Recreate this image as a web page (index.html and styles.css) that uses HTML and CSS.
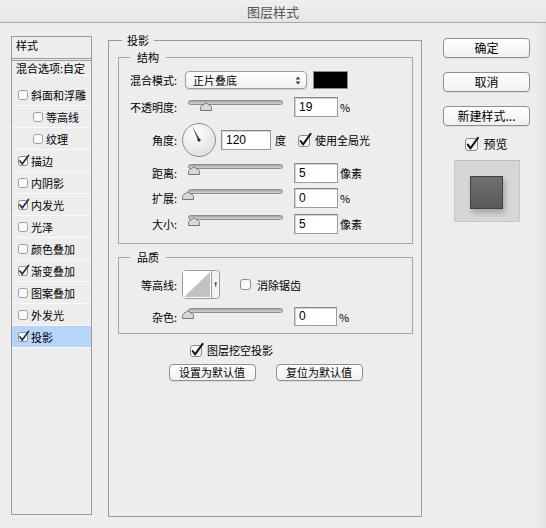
FILE: index.html
```html
<!DOCTYPE html>
<html lang="zh-CN">
<head>
<meta charset="utf-8">
<title>图层样式</title>
<link rel="stylesheet" href="styles.css">
</head>
<body>
<svg class="defs" width="0" height="0" aria-hidden="true">
  <defs>
    <radialGradient id="dialg" cx="40%" cy="30%" r="75%">
      <stop offset="0" stop-color="#ffffff"/>
      <stop offset="1" stop-color="#dedede"/>
    </radialGradient>
  </defs>
</svg>
<div class="titlebar">图层样式</div>
<div class="main">
  <div class="styles-list">
    <div class="list-head">样式</div>
    <div class="list-blend">混合选项:自定</div>
    <ul class="list-items">
      <li class="item"><svg class="lcb" width="10" height="10" viewBox="0 0 10 10"><rect x="0.5" y="0.5" width="9" height="9" rx="2" fill="#fbfbfb" stroke="#9d9d9d"/></svg>斜面和浮雕</li>
      <li class="item sub"><svg class="lcb" width="10" height="10" viewBox="0 0 10 10"><rect x="0.5" y="0.5" width="9" height="9" rx="2" fill="#fbfbfb" stroke="#9d9d9d"/></svg>等高线</li>
      <li class="item sub"><svg class="lcb" width="10" height="10" viewBox="0 0 10 10"><rect x="0.5" y="0.5" width="9" height="9" rx="2" fill="#fbfbfb" stroke="#9d9d9d"/></svg>纹理</li>
      <li class="item"><svg class="lcb" width="10" height="10" viewBox="0 0 10 10"><rect x="0.5" y="0.5" width="9" height="9" rx="2" fill="#fbfbfb" stroke="#8a8a8a"/><path d="M2 5 L4.2 8 L10.5 -0.5" fill="none" stroke="#1e2d55" stroke-width="1.7" stroke-linecap="round" stroke-linejoin="round"/></svg>描边</li>
      <li class="item"><svg class="lcb" width="10" height="10" viewBox="0 0 10 10"><rect x="0.5" y="0.5" width="9" height="9" rx="2" fill="#fbfbfb" stroke="#9d9d9d"/></svg>内阴影</li>
      <li class="item"><svg class="lcb" width="10" height="10" viewBox="0 0 10 10"><rect x="0.5" y="0.5" width="9" height="9" rx="2" fill="#fbfbfb" stroke="#8a8a8a"/><path d="M2 5 L4.2 8 L10.5 -0.5" fill="none" stroke="#1e2d55" stroke-width="1.7" stroke-linecap="round" stroke-linejoin="round"/></svg>内发光</li>
      <li class="item"><svg class="lcb" width="10" height="10" viewBox="0 0 10 10"><rect x="0.5" y="0.5" width="9" height="9" rx="2" fill="#fbfbfb" stroke="#9d9d9d"/></svg>光泽</li>
      <li class="item"><svg class="lcb" width="10" height="10" viewBox="0 0 10 10"><rect x="0.5" y="0.5" width="9" height="9" rx="2" fill="#fbfbfb" stroke="#9d9d9d"/></svg>颜色叠加</li>
      <li class="item"><svg class="lcb" width="10" height="10" viewBox="0 0 10 10"><rect x="0.5" y="0.5" width="9" height="9" rx="2" fill="#fbfbfb" stroke="#8a8a8a"/><path d="M2 5 L4.2 8 L10.5 -0.5" fill="none" stroke="#1e2d55" stroke-width="1.7" stroke-linecap="round" stroke-linejoin="round"/></svg>渐变叠加</li>
      <li class="item"><svg class="lcb" width="10" height="10" viewBox="0 0 10 10"><rect x="0.5" y="0.5" width="9" height="9" rx="2" fill="#fbfbfb" stroke="#9d9d9d"/></svg>图案叠加</li>
      <li class="item"><svg class="lcb" width="10" height="10" viewBox="0 0 10 10"><rect x="0.5" y="0.5" width="9" height="9" rx="2" fill="#fbfbfb" stroke="#9d9d9d"/></svg>外发光</li>
      <li class="item selected"><svg class="lcb" width="10" height="10" viewBox="0 0 10 10"><rect x="0.5" y="0.5" width="9" height="9" rx="2" fill="#fbfbfb" stroke="#8a8a8a"/><path d="M2 5 L4.2 8 L10.5 -0.5" fill="none" stroke="#1e2d55" stroke-width="1.7" stroke-linecap="round" stroke-linejoin="round"/></svg>投影</li>
    </ul>
  </div>

  <div class="panel">
    <div class="legend legend-outer">投影</div>

    <div class="group group-structure">
      <div class="legend">结构</div>
      <div class="row row-blend">
        <div class="lbl">混合模式:</div>
        <div class="select">
          <span>正片叠底</span>
          <svg class="sel-arrows" width="6" height="9" viewBox="0 0 6 9"><path d="M0.5 3.5 L3 0.5 L5.5 3.5 Z M0.5 5.5 L3 8.5 L5.5 5.5 Z" fill="#444"/></svg>
        </div>
        <div class="swatch"></div>
      </div>
      <div class="row row-opacity">
        <div class="lbl">不透明度:</div>
        <div class="slider slider-top3">
          <div class="track"></div>
          <svg class="thumb" style="left:12px" width="12" height="9" viewBox="0 0 12 9"><path d="M0.5 8.5 L0.5 5.6 Q0.5 4.4 1.8 3.6 L6 0.8 L10.2 3.6 Q11.5 4.4 11.5 5.6 L11.5 8.5 Z" fill="#d9d9d9" stroke="#777"/></svg>
        </div>
        <div class="field">19</div>
        <div class="unit">%</div>
      </div>
      <div class="row row-angle">
        <div class="lbl">角度:</div>
        <svg class="dial" width="34" height="34" viewBox="0 0 34 34"><circle cx="17" cy="17" r="16.5" fill="url(#dialg)" stroke="#8f8f8f"/><path d="M16.2 17.4 L10.2 3.4 L17.8 16.6 Z" fill="#333"/><circle cx="17" cy="17" r="1.6" fill="#222"/></svg>
        <div class="field field-angle">120</div>
        <div class="unit unit-deg">度</div>
        <svg class="cb cb-global" width="14" height="14" viewBox="0 0 14 14"><rect x="0.5" y="2.5" width="11" height="11" rx="2.5" fill="#f7f7f7" stroke="#8c8c8c"/><path d="M2.6 8 L5.1 11.4 L12.6 0.9" fill="none" stroke="#151515" stroke-width="2" stroke-linecap="round" stroke-linejoin="round"/></svg>
        <div class="cb-text">使用全局光</div>
      </div>
      <div class="row row-distance">
        <div class="lbl">距离:</div>
        <div class="slider slider-top1">
          <div class="track"></div>
          <svg class="thumb" style="left:0px" width="12" height="9" viewBox="0 0 12 9"><path d="M0.5 8.5 L0.5 5.6 Q0.5 4.4 1.8 3.6 L6 0.8 L10.2 3.6 Q11.5 4.4 11.5 5.6 L11.5 8.5 Z" fill="#d9d9d9" stroke="#777"/></svg>
        </div>
        <div class="field">5</div>
        <div class="unit">像素</div>
      </div>
      <div class="row row-spread">
        <div class="lbl">扩展:</div>
        <div class="slider slider-top1">
          <div class="track"></div>
          <svg class="thumb" style="left:-6px" width="12" height="9" viewBox="0 0 12 9"><path d="M0.5 8.5 L0.5 5.6 Q0.5 4.4 1.8 3.6 L6 0.8 L10.2 3.6 Q11.5 4.4 11.5 5.6 L11.5 8.5 Z" fill="#d9d9d9" stroke="#777"/></svg>
        </div>
        <div class="field">0</div>
        <div class="unit">%</div>
      </div>
      <div class="row row-size">
        <div class="lbl">大小:</div>
        <div class="slider slider-top1">
          <div class="track"></div>
          <svg class="thumb" style="left:0px" width="12" height="9" viewBox="0 0 12 9"><path d="M0.5 8.5 L0.5 5.6 Q0.5 4.4 1.8 3.6 L6 0.8 L10.2 3.6 Q11.5 4.4 11.5 5.6 L11.5 8.5 Z" fill="#d9d9d9" stroke="#777"/></svg>
        </div>
        <div class="field">5</div>
        <div class="unit">像素</div>
      </div>
    </div>

    <div class="group group-quality">
      <div class="legend">品质</div>
      <div class="row row-contour">
        <div class="lbl">等高线:</div>
        <svg class="contour" width="38" height="29" viewBox="0 0 38 29"><rect x="0.5" y="0.5" width="37" height="28" rx="3" fill="#f3f3f3" stroke="#9a9a9a"/><rect x="1" y="1" width="28" height="27" fill="#ffffff"/><polygon points="2,27 28,2 28,27" fill="#c2c2c2"/><line x1="29.5" y1="0.5" x2="29.5" y2="28.5" stroke="#9a9a9a"/><path d="M32.2 12.5 L35.2 12.5 L34.2 14.2 L34.2 16.5 L33.2 16.5 L33.2 14.2 Z" fill="#333"/></svg>
        <svg class="cb cb-anti" width="11" height="11" viewBox="0 0 11 11"><rect x="0.5" y="0.5" width="10" height="10" rx="2.5" fill="#f9f9f9" stroke="#8c8c8c"/></svg>
        <div class="cb-text cb-text-anti">消除锯齿</div>
      </div>
      <div class="row row-noise">
        <div class="lbl">杂色:</div>
        <div class="slider slider-top1">
          <div class="track"></div>
          <svg class="thumb" style="left:-6px" width="12" height="9" viewBox="0 0 12 9"><path d="M0.5 8.5 L0.5 5.6 Q0.5 4.4 1.8 3.6 L6 0.8 L10.2 3.6 Q11.5 4.4 11.5 5.6 L11.5 8.5 Z" fill="#d9d9d9" stroke="#777"/></svg>
        </div>
        <div class="field field-noise">0</div>
        <div class="unit">%</div>
      </div>
    </div>

    <div class="row row-knockout">
      <svg class="cb" width="14" height="14" viewBox="0 0 14 14"><rect x="0.5" y="2.5" width="11" height="11" rx="2.5" fill="#f7f7f7" stroke="#8c8c8c"/><path d="M2.6 8 L5.1 11.4 L12.6 0.9" fill="none" stroke="#151515" stroke-width="2" stroke-linecap="round" stroke-linejoin="round"/></svg>
      <div class="cb-text">图层挖空投影</div>
    </div>

    <div class="row row-defaults">
      <div class="btn btn-small">设置为默认值</div>
      <div class="btn btn-small">复位为默认值</div>
    </div>
  </div>

  <div class="actions">
    <div class="btn btn-main">确定</div>
    <div class="btn btn-main">取消</div>
    <div class="btn btn-main">新建样式...</div>
    <div class="preview-check">
      <svg class="cb" width="14" height="14" viewBox="0 0 14 14"><rect x="0.5" y="1.5" width="12" height="12" rx="2.5" fill="#f7f7f7" stroke="#8c8c8c"/><path d="M2.8 7.6 L5.4 11.4 L13 0.9" fill="none" stroke="#151515" stroke-width="2" stroke-linecap="round" stroke-linejoin="round"/></svg>
      <span>预览</span>
    </div>
    <div class="preview-box">
      <div class="preview-square"></div>
    </div>
  </div>
</div>
</body>
</html>
```

FILE: styles.css
```css
html, body {
  margin: 0;
  padding: 0;
}

body {
  width: 546px;
  height: 528px;
  overflow: hidden;
  background: linear-gradient(to right, #ededed 0, #ededed 536px, #e2e2e2 546px);
  font-family: "Noto Sans CJK SC", "Noto Sans", sans-serif;
  font-size: 11px;
  color: #000;
}

.defs {
  position: absolute;
  width: 0;
  height: 0;
}

.titlebar {
  height: 22px;
  line-height: 24px;
  border-bottom: 1px solid #a9a9a9;
  background: linear-gradient(#efefef, #e6e6e6);
  text-align: center;
  font-size: 13px;
  color: #555;
}

.main {
  display: flex;
  align-items: flex-start;
  padding: 13px 0 0 11px;
}

/* ---------- left list ---------- */
.styles-list {
  flex: none;
  width: 81px;
  height: 479px;
  box-sizing: border-box;
  border: 1px solid #9a9a9a;
}

.list-head {
  height: 20px;
  padding: 1px 0 0 4px;
  line-height: 14px;
  border-bottom: 1px solid #9a9a9a;
}

.list-blend {
  margin-top: 1px;
  height: 14px;
  line-height: 14px;
  padding-left: 4px;
  border-top: 1px solid #9a9a9a;
  border-bottom: 1px solid #fbfbfb;
  white-space: nowrap;
}

.list-items {
  list-style: none;
  margin: 0;
  padding: 8px 0 0 0;
}

.item {
  display: flex;
  align-items: center;
  height: 21px;
  padding-left: 6px;
  border-bottom: 1px solid #fafafa;
  white-space: nowrap;
}

.item.sub {
  padding-left: 21px;
}

.item.selected {
  background: #b7d5fb;
}

.lcb {
  flex: none;
  overflow: visible;
  margin-right: 3px;
}

/* ---------- middle panel ---------- */
.panel {
  flex: none;
  margin: 4px 0 0 16px;
  width: 314px;
  height: 477px;
  box-sizing: border-box;
  border: 1px solid #9a9a9a;
  padding: 0 8px 0 9px;
}

.legend {
  display: table;
  height: 14px;
  line-height: 14px;
  margin: -8px 0 0 11px;
  padding: 0 7px;
  background: #ededed;
  color: #000;
}

.legend-outer {
  margin-left: 4px;
  padding: 0 5px;
}

.group {
  width: 295px;
  box-sizing: border-box;
  border: 1px solid #a6a6a6;
}

.group-structure {
  margin-top: 10px;
  padding-bottom: 9px;
}

.group-quality {
  margin-top: 13px;
  padding-bottom: 7px;
}

.row {
  display: flex;
  align-items: center;
  white-space: nowrap;
}

.lbl {
  flex: none;
  width: 58px;
  text-align: right;
  line-height: 14px;
}

.row-blend { height: 18px; margin-top: 7px; }
.row-opacity { height: 20px; margin-top: 8px; }
.row-angle { height: 34px; margin-top: 6px; }
.row-distance { height: 20px; margin-top: 6px; }
.row-spread { height: 20px; margin-top: 5px; }
.row-size { height: 20px; margin-top: 6px; }
.row-contour { height: 29px; margin-top: 6px; }
.row-noise { height: 19px; margin-top: 8px; }

.select {
  flex: none;
  display: flex;
  align-items: center;
  margin-left: 8px;
  width: 122px;
  height: 18px;
  box-sizing: border-box;
  border: 1px solid #9c9c9c;
  border-radius: 4px;
  background: linear-gradient(#ffffff, #f1f1f1);
  box-shadow: 0 1px 1px rgba(0, 0, 0, 0.12);
  padding-left: 7px;
}

.sel-arrows {
  margin-left: auto;
  margin-right: 5px;
}

.swatch {
  flex: none;
  margin-left: 6px;
  width: 35px;
  height: 18px;
  box-sizing: border-box;
  background: #000;
  border: 1px solid #8a8a8a;
}

.slider {
  flex: none;
  position: relative;
  align-self: flex-start;
  margin-left: 11px;
  width: 95px;
  height: 12px;
}

.slider-top3 { margin-top: 3px; }
.slider-top1 { margin-top: 1px; }

.track {
  height: 5px;
  box-sizing: border-box;
  border: 1px solid #8d8d8d;
  border-radius: 3px;
  background: linear-gradient(#a4a4a4, #d4d4d4);
}

.thumb {
  position: absolute;
  top: 2px;
}

.field {
  flex: none;
  margin-left: 11px;
  width: 44px;
  height: 20px;
  box-sizing: border-box;
  background: #fff;
  border: 1px solid #9c9c9c;
  border-top-color: #858585;
  box-shadow: inset 1px 1px 0 #d2d2d2;
  padding-left: 4px;
  font-family: "Liberation Sans", Arial, sans-serif;
  font-size: 12px;
  line-height: 18px;
}

.field-angle {
  margin-left: 5px;
  width: 50px;
}

.field-noise {
  width: 43px;
  height: 19px;
  line-height: 17px;
}

.unit {
  margin-left: 2px;
  font-size: 11px;
}

.unit-deg {
  margin-left: 4px;
}

.dial {
  flex: none;
  margin-left: 5px;
}

.cb {
  flex: none;
  overflow: visible;
}

.cb-global {
  margin-left: 12px;
}

.cb-text {
  margin-left: 3px;
  line-height: 14px;
}

.contour {
  flex: none;
  margin-left: 5px;
}

.cb-anti {
  margin-left: 20px;
}

.cb-text-anti {
  margin-left: 6px;
}

.row-knockout {
  height: 14px;
  margin: 9px 0 0 72px;
}

.row-defaults {
  justify-content: center;
  gap: 20px;
  margin-top: 7px;
}

.btn {
  box-sizing: border-box;
  border: 1px solid #8f8f8f;
  border-radius: 4px;
  background: linear-gradient(#ffffff, #f0f0f0);
  box-shadow: 0 1px 0 rgba(0, 0, 0, 0.07);
  text-align: center;
  white-space: nowrap;
}

.btn-small {
  width: 87px;
  height: 17px;
  line-height: 15px;
  font-size: 11px;
}

/* ---------- right actions ---------- */
.actions {
  flex: none;
  display: flex;
  flex-direction: column;
  align-items: center;
  margin: 2px 0 0 21px;
  width: 87px;
}

.btn-main {
  width: 87px;
  height: 20px;
  line-height: 18px;
  font-size: 12px;
  margin-bottom: 14px;
}

.btn-main:nth-child(3) {
  margin-bottom: 0;
}

.preview-check {
  display: flex;
  align-items: center;
  margin-top: 11px;
  height: 13px;
  font-size: 12px;
}

.preview-check span {
  margin-left: 4px;
}

.preview-box {
  display: flex;
  align-items: center;
  justify-content: center;
  margin-top: 10px;
  width: 66px;
  height: 62px;
  box-sizing: border-box;
  background: #d6d6d6;
  border: 1px solid #c6c6c6;
  border-top-color: #bdbdbd;
}

.preview-square {
  margin-top: 3px;
  width: 33px;
  height: 33px;
  box-sizing: border-box;
  background: linear-gradient(#707070, #595959);
  border: 1px solid #404040;
  box-shadow: 2px 4px 5px rgba(0, 0, 0, 0.22);
}
```
